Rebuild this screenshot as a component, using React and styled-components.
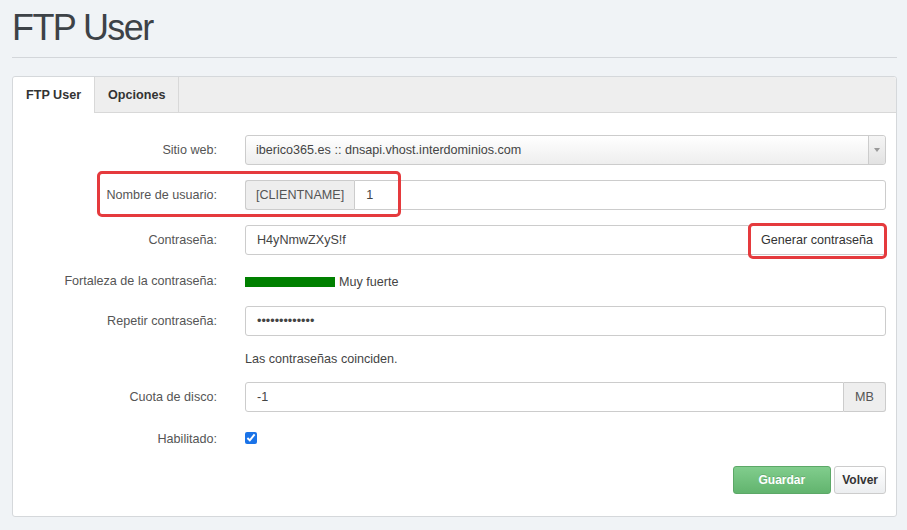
import React from "react";
import styled, { createGlobalStyle } from "styled-components";

const GlobalStyle = createGlobalStyle`
  body {
    margin: 0;
    background: #f0f3f6;
    font-family: "Liberation Sans", Arial, sans-serif;
    font-size: 12.6px;
    color: #555;
  }
`;

const Page = styled.div`
  padding: 0 10px 0 12px;
`;

const Title = styled.h1`
  margin: 9px 0 0;
  font-family: "Liberation Sans", Arial, sans-serif;
  font-weight: 400;
  font-size: 36px;
  letter-spacing: -1.6px;
  line-height: 38px;
  color: #3d4247;
`;

const Rule = styled.hr`
  margin: 10px 0 18px;
  border: 0;
  border-top: 1px solid #d3d6da;
`;

const Panel = styled.div`
  background: #fff;
  border: 1px solid #d5d8db;
  border-radius: 3px;
`;

const TabBar = styled.div`
  display: flex;
  height: 35px;
  background: #eeeeee;
  border-bottom: 1px solid #d8d8d8;
  border-radius: 3px 3px 0 0;
`;

const Tab = styled.div`
  display: flex;
  align-items: center;
  padding: 0 13px;
  font-weight: 700;
  font-size: 12.6px;
  color: #333;
  border-right: 1px solid #d8d8d8;
  background: ${(p) => (p.$active ? "#fff" : "transparent")};
  height: ${(p) => (p.$active ? "36px" : "35px")};
  border-top-left-radius: ${(p) => (p.$active ? "3px" : "0")};
`;

const Form = styled.div`
  padding: 22px 10px 22px 0;
`;

const Row = styled.div`
  position: relative;
  display: grid;
  grid-template-columns: 232px 1fr;
  align-items: center;
  height: ${(p) => p.$h || 30}px;
  margin-bottom: ${(p) => (p.$last ? 0 : 15)}px;
`;

const Label = styled.div`
  text-align: right;
  padding-right: 28px;
  color: #555;
`;

const Field = styled.div`
  display: flex;
  align-items: stretch;
  height: 30px;
`;

const Input = styled.div`
  flex: 1;
  display: flex;
  align-items: center;
  padding: 0 11px;
  border: 1px solid #ccc;
  border-radius: ${(p) => p.$radius || "3px"};
  background: #fff;
  color: #444;
`;

const Addon = styled.div`
  position: relative;
  display: flex;
  align-items: center;
  padding: 0 ${(p) => p.$pad || 11}px;
  border: 1px solid #ccc;
  background: ${(p) => (p.$white ? "#fff" : "#eee")};
  color: ${(p) => (p.$white ? "#333" : "#555")};
  border-radius: ${(p) => p.$radius || "0"};
  ${(p) => (p.$left ? "border-right: 0;" : "border-left: 0;")}
`;

const Select = styled.div`
  flex: 1;
  display: flex;
  border: 1px solid #ccc;
  border-radius: 3px;
  background: linear-gradient(#ffffff, #eeeeee);
  color: #444;
`;

const SelectText = styled.div`
  flex: 1;
  display: flex;
  align-items: center;
  padding: 0 10px;
`;

const SelectArrow = styled.div`
  width: 16px;
  border-left: 1px solid #ccc;
  display: flex;
  align-items: center;
  justify-content: center;
  background: linear-gradient(#f5f5f5, #e2e2e2);
  border-radius: 0 3px 3px 0;
  &::after {
    content: "";
    border-left: 3px solid transparent;
    border-right: 3px solid transparent;
    border-top: 4px solid #999;
  }
`;

const Highlight = styled.div`
  position: absolute;
  top: ${(p) => p.$top}px;
  ${(p) => (p.$right !== undefined ? `right: ${p.$right}px;` : `left: ${p.$left}px;`)}
  width: ${(p) => p.$w}px;
  height: ${(p) => p.$h}px;
  border: 3px solid #e53a3d;
  border-radius: 5px;
  box-sizing: border-box;
  pointer-events: none;
`;

const Strength = styled.div`
  display: flex;
  align-items: center;
  gap: 4px;
  padding-top: 3px;
  color: #444;
`;

const StrengthBar = styled.div`
  width: 90px;
  height: 10px;
  background: #008000;
`;

const Note = styled.div`
  color: #444;
`;

const Check = styled.input`
  width: 12px;
  height: 12px;
  margin: 0;
  accent-color: #1a73e8;
`;

const Actions = styled.div`
  display: flex;
  justify-content: flex-end;
  gap: 3px;
`;

const Button = styled.button`
  height: 28px;
  padding: 0 ${(p) => (p.$primary ? 25 : 7)}px;
  font-family: "Liberation Sans", Arial, sans-serif;
  font-weight: 700;
  font-size: 12px;
  border-radius: 3px;
  border: 1px solid ${(p) => (p.$primary ? "#5ca867" : "#ccc")};
  color: ${(p) => (p.$primary ? "#fff" : "#333")};
  background: ${(p) =>
    p.$primary
      ? "linear-gradient(#81cd8d, #62b46e)"
      : "linear-gradient(#ffffff, #eceef0)"};
  text-shadow: ${(p) => (p.$primary ? "0 -1px 0 rgba(0,0,0,0.15)" : "none")};
`;

export default function App() {
  return (
    <Page>
      <GlobalStyle />
      <Title>FTP User</Title>
      <Rule />
      <Panel>
        <TabBar>
          <Tab $active>FTP User</Tab>
          <Tab>Opciones</Tab>
        </TabBar>
        <Form>
          <Row>
            <Label>Sitio web:</Label>
            <Field>
              <Select>
                <SelectText>iberico365.es :: dnsapi.vhost.interdominios.com</SelectText>
                <SelectArrow />
              </Select>
            </Field>
          </Row>
          <Row>
            <Highlight $top={-9} $left={84} $w={304} $h={46} />
            <Label>Nombre de usuario:</Label>
            <Field>
              <Addon $left $pad={10} $radius="3px 0 0 3px">[CLIENTNAME]</Addon>
              <Input $radius="0 3px 3px 0">1</Input>
            </Field>
          </Row>
          <Row>
            <Label>Contraseña:</Label>
            <Field>
              <Input $radius="3px 0 0 3px">H4yNmwZXyS!f</Input>
              <Addon $white $pad={12} $radius="0 3px 3px 0">
                Generar contraseña
                <Highlight $top={-3} $right={-2} $w={139} $h={36} />
              </Addon>
            </Field>
          </Row>
          <Row $h={21}>
            <Label>Fortaleza de la contraseña:</Label>
            <Strength>
              <StrengthBar />
              Muy fuerte
            </Strength>
          </Row>
          <Row>
            <Label>Repetir contraseña:</Label>
            <Field>
              <Input>•••••••••••••</Input>
            </Field>
          </Row>
          <Row $h={16}>
            <span />
            <Note>Las contraseñas coinciden.</Note>
          </Row>
          <Row>
            <Label>Cuota de disco:</Label>
            <Field>
              <Input $radius="3px 0 0 3px">-1</Input>
              <Addon $pad={11} $radius="0 3px 3px 0">MB</Addon>
            </Field>
          </Row>
          <Row $h={24}>
            <Label>Habilitado:</Label>
            <div>
              <Check type="checkbox" defaultChecked />
            </div>
          </Row>
          <Row $h={28} $last>
            <span />
            <Actions>
              <Button $primary>Guardar</Button>
              <Button>Volver</Button>
            </Actions>
          </Row>
        </Form>
      </Panel>
    </Page>
  );
}
